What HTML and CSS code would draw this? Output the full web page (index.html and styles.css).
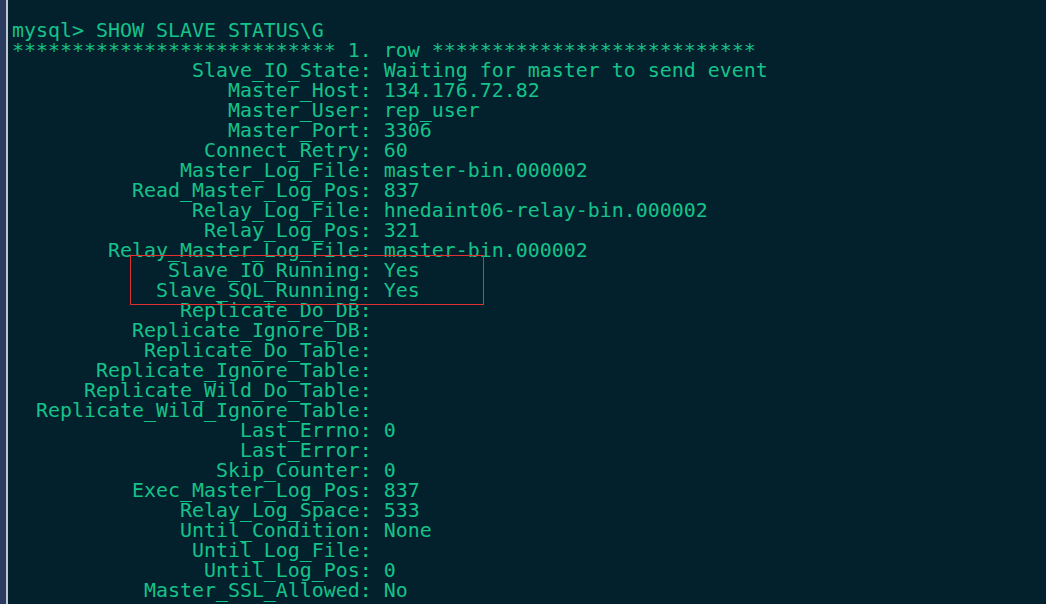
FILE: index.html
```html
<!DOCTYPE html>
<html>
<head>
<meta charset="utf-8">
<link rel="stylesheet" href="styles.css">
</head>
<body>
<div class="window">
  <div class="edge"><div class="edge-dark"></div><div class="edge-light"></div></div>
  <div class="terminal">
<pre class="output">mysql&gt; SHOW SLAVE STATUS\G
*************************** 1. row ***************************
               Slave_IO_State: Waiting for master to send event
                  Master_Host: 134.176.72.82
                  Master_User: rep_user
                  Master_Port: 3306
                Connect_Retry: 60
              Master_Log_File: master-bin.000002
          Read_Master_Log_Pos: 837
               Relay_Log_File: hnedaint06-relay-bin.000002
                Relay_Log_Pos: 321
        Relay_Master_Log_File: master-bin.000002
             Slave_IO_Running: Yes
            Slave_SQL_Running: Yes
              Replicate_Do_DB:
          Replicate_Ignore_DB:
           Replicate_Do_Table:
       Replicate_Ignore_Table:
      Replicate_Wild_Do_Table:
  Replicate_Wild_Ignore_Table:
                   Last_Errno: 0
                   Last_Error:
                 Skip_Counter: 0
          Exec_Master_Log_Pos: 837
              Relay_Log_Space: 533
              Until_Condition: None
               Until_Log_File:
                Until_Log_Pos: 0
           Master_SSL_Allowed: No</pre>
    <div class="highlight"></div>
  </div>
</div>
</body>
</html>
```

FILE: styles.css
```css
html, body {
  margin: 0;
  padding: 0;
  width: 1046px;
  height: 604px;
  overflow: hidden;
  background: #03212c;
}
.window {
  display: flex;
  width: 1046px;
  height: 604px;
}
.edge {
  display: flex;
  flex: 0 0 8px;
}
.edge-dark {
  width: 6px;
  background: #2b3b60;
}
.edge-light {
  width: 2px;
  background: #bfc5d2;
}
.terminal {
  position: relative;
  flex: 1;
  background: #03212c;
  padding: 21px 0 0 4px;
}
.output {
  margin: 0;
  font-family: "DejaVu Sans Mono", "Liberation Mono", monospace;
  font-size: 19.93px;
  line-height: 20px;
  color: #16c28a;
  white-space: pre;
}
.highlight {
  position: absolute;
  left: 122px;
  top: 255px;
  width: 352px;
  height: 48px;
  border: 1px solid #e0302f;
}
```
